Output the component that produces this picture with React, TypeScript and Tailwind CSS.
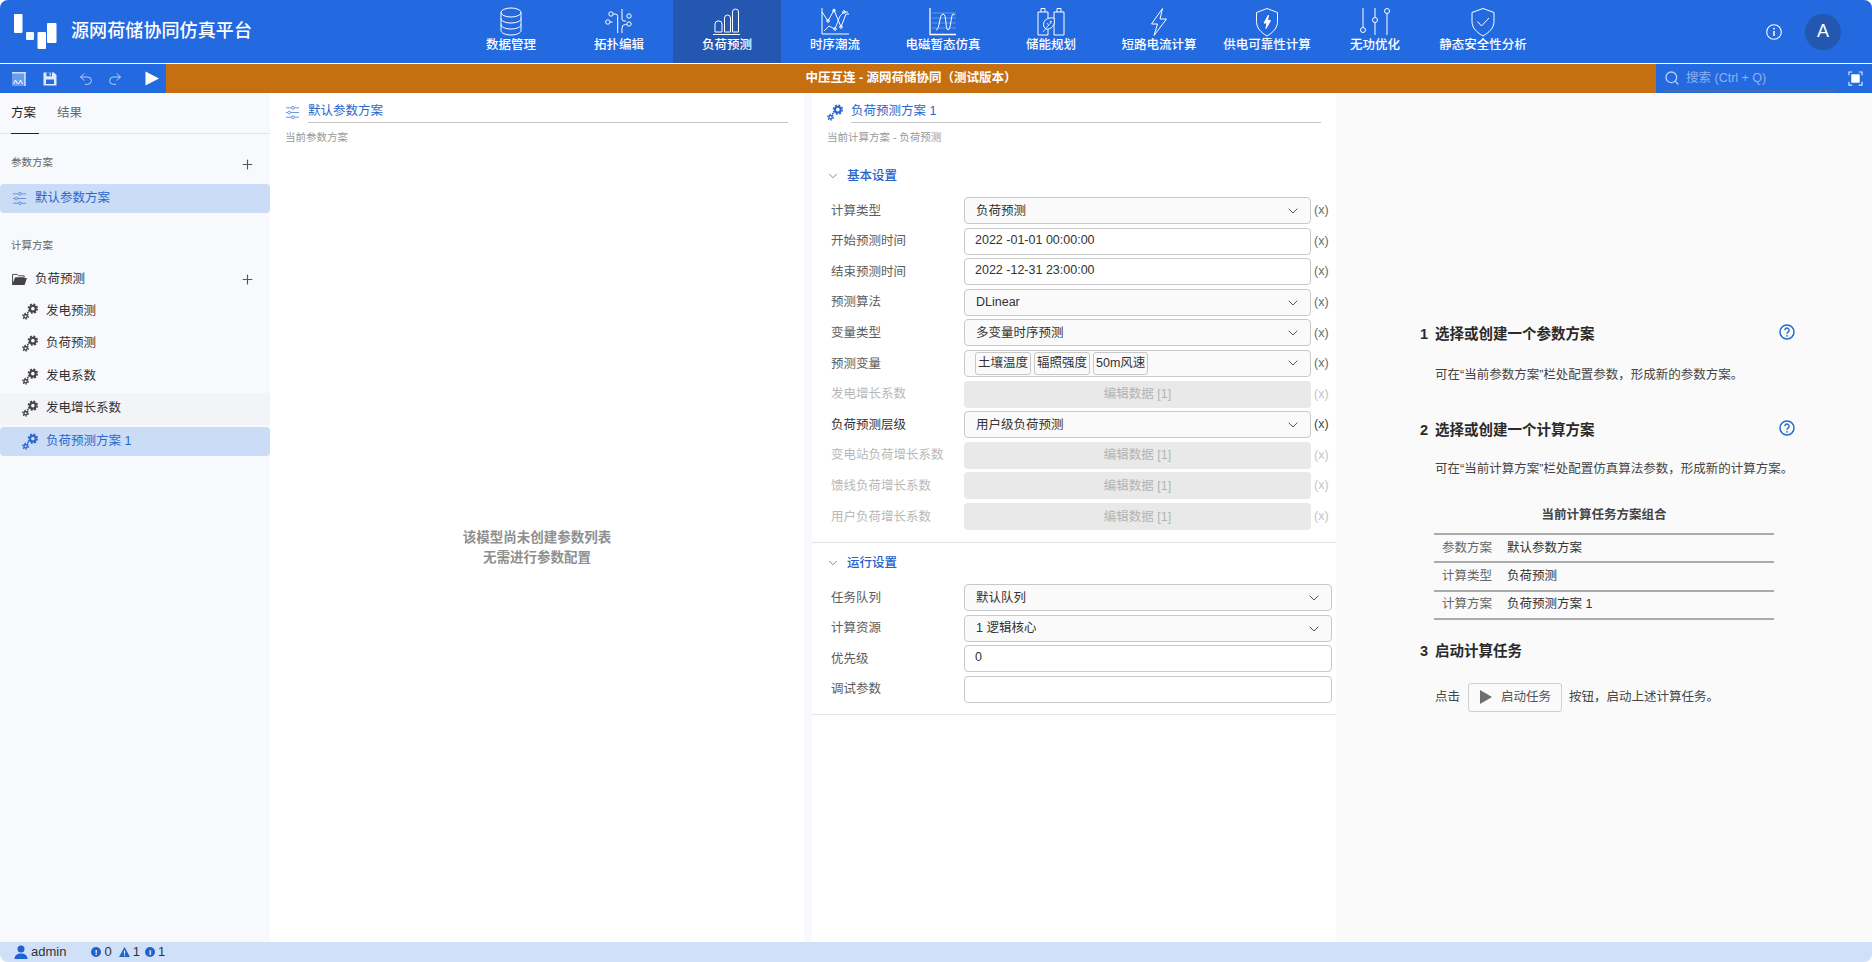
import { ReactNode } from "react";
import { ChevronDown, Plus, Redo2, Search, Undo2 } from "lucide-react";

const font = { fontFamily: '"Liberation Sans", "Noto Sans CJK SC", sans-serif' };

function Line(props: { children: ReactNode; className?: string }) {
    return (
        <svg viewBox="0 0 30 30" fill="none" stroke="currentColor" strokeWidth="1" className={props.className ?? "w-[30px] h-[30px]"}>
            {props.children}
        </svg>
    );
}

const navItems: { label: string; icon: ReactNode; active?: boolean }[] = [
    {
        label: "数据管理",
        icon: (
            <Line>
                <ellipse cx="15" cy="5.5" rx="10" ry="4.5" />
                <path d="M5 5.5v18c0 2.5 4.5 4.5 10 4.5s10-2 10-4.5v-18" />
                <path d="M5 11.5c0 2.5 4.5 4.5 10 4.5s10-2 10-4.5" />
                <path d="M5 17.5c0 2.5 4.5 4.5 10 4.5s10-2 10-4.5" />
            </Line>
        ),
    },
    {
        label: "拓扑编辑",
        icon: (
            <Line>
                <circle cx="7" cy="7" r="2.2" />
                <circle cx="3.8" cy="15" r="2.2" />
                <circle cx="25" cy="9" r="2.2" />
                <circle cx="25" cy="17" r="2.2" />
                <path d="M9.2 7h2a2.5 2.5 0 0 1 2.5 2.5V26" />
                <path d="M6 15h2.5" />
                <path d="M18 2v10a2 2 0 0 0 2 2h2" />
                <path d="M18 26v-5a3.500 3.500 0 0 1 3.500-3.500h1.300" />
            </Line>
        ),
    },
    {
        label: "负荷预测",
        active: true,
        icon: (
            <Line>
                <path d="M1 27.500h27" />
                <path d="M3 25v-8a3 3 0 0 1 3-3h1a3 3 0 0 1 3 3v8z" />
                <path d="M12.500 25V11a3 3 0 0 1 6 0v14z" />
                <path d="M20.500 25V5a3 3 0 0 1 6 0v20z" />
            </Line>
        ),
    },
    {
        label: "时序潮流",
        icon: (
            <Line>
                <path d="M2 1v26h27" />
                <path d="M2 5l6 9 6-11 7 17 5-13h3" />
                <path d="M4 24l5-5 6 3 5-13 4-4h4" strokeWidth="0.900" />
                <circle cx="8" cy="14" r="1.300" />
                <circle cx="14" cy="3.500" r="1.300" />
                <circle cx="15" cy="22" r="1.300" />
                <circle cx="21" cy="20" r="1.300" />
                <circle cx="24" cy="5" r="1.300" />
            </Line>
        ),
    },
    {
        label: "电磁暂态仿真",
        icon: (
            <Line>
                <path d="M2 1v26.500h26" strokeWidth="1.300" />
                <path d="M4 6h24M4 11h24M4 16h24M4 21h24" strokeWidth="0.500" opacity="0.600" />
                <path d="M8 23c4 0 3-16 7-16s2 16 5 16 3-16 5-16 1 1 2 1" />
            </Line>
        ),
    },
    {
        label: "储能规划",
        icon: (
            <Line>
                <path d="M2 5h10v23H2zM18 5h10v23H18zM5 5V1.500h4V5M21 5V1.500h4V5" />
                <path d="M8 20c-2-6 3-10 10-9 2 7-3 12-8 11z" fill="#236ae0" />
                <path d="M7 25l9-11M11 16l2 3M14 13.500l1 3" strokeWidth="0.700" />
            </Line>
        ),
    },
    {
        label: "短路电流计算",
        icon: (
            <Line>
                <path d="M18.500 1.500L7.500 17h6l-3.500 11.500L22.500 12h-6.500z" />
            </Line>
        ),
    },
    {
        label: "供电可靠性计算",
        icon: (
            <Line>
                <path d="M15 1.500l10.500 4v9c0 6.500-4.500 11-10.500 14.500C9 25.500 4.500 21 4.500 14.500v-9z" />
                <path d="M16.500 8l-4.500 8h3l-1 5.500 4.500-8h-3z" fill="currentColor" />
            </Line>
        ),
    },
    {
        label: "无功优化",
        icon: (
            <Line>
                <circle cx="3" cy="23" r="2.500" />
                <circle cx="15" cy="13" r="2.500" />
                <circle cx="27" cy="4" r="2.500" />
                <path d="M3 1v19.500M15 1v9.500M15 15.500V28M27 6.500V28" />
            </Line>
        ),
    },
    {
        label: "静态安全性分析",
        icon: (
            <Line>
                <path d="M15 1.500l11 4v9c0 6.500-5 11-11 14.500C9 25.500 4 21 4 14.500v-9z" />
                <path d="M9.500 14.500l4 4.500 7.500-8" />
            </Line>
        ),
    },
];

function SliderIcon() {
    return (
        <svg viewBox="0 0 16 16" fill="none" stroke="#5f8fe0" strokeWidth="1" className="w-[15px] h-[15px] shrink-0">
            <path d="M1 3h6M10 3h5M1 8h2M6 8h9M1 13h6M10 13h5" />
            <circle cx="8.500" cy="3" r="1.500" />
            <circle cx="4.500" cy="8" r="1.500" />
            <circle cx="8.500" cy="13" r="1.500" />
        </svg>
    );
}

function GearsIcon(props: { color: string }) {
    return (
        <svg viewBox="0 0 18 18" fill="none" stroke={props.color} className="w-[17px] h-[17px] shrink-0">
            <circle cx="11.500" cy="6" r="3" strokeWidth="2.200" />
            <circle cx="11.500" cy="6" r="4.600" strokeWidth="1.800" strokeDasharray="2 1.610" />
            <circle cx="3.800" cy="14" r="1.800" strokeWidth="1.500" />
            <circle cx="3.800" cy="14" r="3" strokeWidth="1.300" strokeDasharray="1.500 1.640" />
            <path d="M5.500 10.800l1.500-1.500" strokeWidth="1.400" />
        </svg>
    );
}

function FolderIcon() {
    return (
        <svg viewBox="0 0 16 14" className="w-[15px] h-[13px] shrink-0" fill="#444">
            <path d="M0.500 13V1.500h5l1.500 1.500h6v2H3.500L1.300 11" fill="none" stroke="#444" />
            <path d="M3.500 5.500H16L13.500 13H0.500z" />
        </svg>
    );
}

function TaskIcon() {
    return (
        <svg viewBox="0 0 16 16" className="w-[16px] h-[16px] shrink-0" fill="none">
            <rect x="1" y="1" width="14" height="14" fill="#6b9bee" />
            <path d="M1 1.800h14M13.800 1v14" stroke="#cfe0fb" strokeWidth="1.400" />
            <path d="M2.500 13l2-4 2 4M7.500 13l2-4 2 4" stroke="#ffffff" strokeWidth="1" />
        </svg>
    );
}

function SaveIcon() {
    return (
        <svg viewBox="0 0 14 14" className="w-[14px] h-[14px] shrink-0" fill="#e3ecfc">
            <path d="M0.500 0.500h10.500l2.500 2.500v10.500H0.500z" />
            <rect x="3.500" y="0.500" width="5.500" height="3.800" fill="#236ae0" />
            <rect x="3" y="7.500" width="8" height="4.500" fill="#236ae0" />
            <rect x="6.500" y="1.200" width="1.400" height="2.300" fill="#e3ecfc" />
        </svg>
    );
}

function CircleMark(props: { glyph: string }) {
    return (
        <svg viewBox="0 0 10 10" className="w-[10px] h-[10px]">
            <circle cx="5" cy="5" r="5" fill="#1f63cf" />
            <text x="5" y="8.300" textAnchor="middle" fontSize="8" fontWeight="700" fill="#ffffff" fontFamily="Liberation Sans">{props.glyph}</text>
        </svg>
    );
}

function HelpIcon() {
    return (
        <svg viewBox="0 0 16 16" className="w-[16px] h-[16px] shrink-0 -mt-[6px]" fill="none">
            <circle cx="8" cy="8" r="7" stroke="#1d6cc6" strokeWidth="1.500" />
            <path d="M5.900 6.200a2.100 2.100 0 1 1 3.300 1.700c-.8.5-1.200.9-1.200 1.800" stroke="#1d6cc6" strokeWidth="1.400" />
            <circle cx="8" cy="11.800" r="0.900" fill="#1d6cc6" />
        </svg>
    );
}

function TreeRow(props: { label: string; hover?: boolean }) {
    return (
        <div className={`h-[32.5px] pl-[22px] flex items-center gap-[7px] text-[12.5px] text-[#333] ${props.hover ? "bg-[#f3f4f7]" : ""}`}>
            <GearsIcon color="#444444" />
            {props.label}
        </div>
    );
}

function Chevron() {
    return <ChevronDown size={16} strokeWidth={1.500} className="text-[#555] shrink-0" />;
}

function SelectBox(props: { children: ReactNode; tags?: boolean }) {
    return (
        <div className={`flex-1 h-[27px] bg-[#fafafa] border border-[#c9c9c9] rounded-[4px] flex items-center pr-[9px] text-[12.5px] text-[#333] ${props.tags ? "pl-[10px]" : "pl-[11px] pt-[1px]"}`}>
            <div className="flex-1 flex items-center gap-[3px]">{props.children}</div>
            <Chevron />
        </div>
    );
}

function TextBox(props: { value?: string }) {
    return (
        <div className="flex-1 h-[27px] bg-white border border-[#c9c9c9] rounded-[4px] pl-[10px] pb-[2px] flex items-center text-[12.5px] text-[#333]">
            {props.value}
        </div>
    );
}

function Tag(props: { label: string }) {
    return (
        <span className="h-[23px] px-[2px] flex items-center bg-[#fafafa] border border-[#c9c9c9] rounded-[3px] whitespace-nowrap">
            {props.label}
        </span>
    );
}

function FormRow(props: { label: string; children: ReactNode; noVar?: boolean; off?: boolean; strong?: boolean }) {
    const labelColor = props.off ? "text-[#b8b8b8]" : props.strong ? "text-[#333]" : "text-[#5c5c5c]";
    const varColor = props.off ? "text-[#c4c4c4]" : props.strong ? "text-[#444]" : "text-[#6a6a6a]";
    return (
        <div className="flex items-center h-[27px]">
            <div className={`w-[133px] pt-[1px] text-[12.5px] shrink-0 ${labelColor}`}>{props.label}</div>
            {props.children}
            {!props.noVar && <div className={`w-[21px] pl-[3px] text-[12.5px] whitespace-nowrap ${varColor}`}>(x)</div>}
        </div>
    );
}

function EditData() {
    return (
        <div className="flex-1 h-[27px] bg-[#e9e9e9] rounded-[4px] pt-[1px] flex items-center justify-center text-[12.5px] text-[#b4b4b4]">
            编辑数据 [1]
        </div>
    );
}

function SectionHead(props: { label: string }) {
    return (
        <div className="h-[22px] pl-[14px] flex items-center gap-[7px] text-[12.5px] text-[#2663c9] font-medium">
            <ChevronDown size={14} strokeWidth={1.500} className="text-[#777]" />
            {props.label}
        </div>
    );
}

function StepHead(props: { num: string; label: string; help?: boolean }) {
    return (
        <div className="h-[24px] flex items-center text-[14.5px] font-bold text-[#2a2a2a]">
            <span className="w-[15px]">{props.num}</span>
            {props.label}
            {props.help && <span className="ml-auto mr-[0px]"><HelpIcon /></span>}
        </div>
    );
}

const combo = [
    ["参数方案", "默认参数方案"],
    ["计算类型", "负荷预测"],
    ["计算方案", "负荷预测方案 1"],
];

export default function App() {
    return (
        <div style={font} className="w-[1872px] h-[962px] flex flex-col overflow-hidden rounded-[8px] bg-white">

            {/* Top bar */}
            <div className="h-[64px] shrink-0 flex bg-[#236ae0] border-b border-white text-white">
                <div className="w-[457px] pl-[14px] flex items-center gap-[14px]">
                    <svg viewBox="0 0 43 36" className="w-[43px] h-[36px] mt-[0px]" fill="#ffffff">
                        <rect x="0" y="0" width="8.500" height="19" rx="1" />
                        <rect x="12" y="18" width="8" height="8" rx="1" opacity="0.950" />
                        <rect x="23.500" y="18" width="8.500" height="17" rx="1" />
                        <rect x="33" y="9" width="9.500" height="20" rx="1" />
                    </svg>
                    <span className="text-[18px] font-medium tracking-[0.1px] whitespace-nowrap">源网荷储协同仿真平台</span>
                </div>
                <div className="flex">
                    {navItems.map((item) => (
                        <div key={item.label} className={`w-[108px] h-[63px] pt-[7px] flex flex-col items-center ${item.active ? "bg-[#2458b0]" : ""}`}>
                            {item.icon}
                            <span className="text-[12.5px] leading-[16px] whitespace-nowrap font-medium">{item.label}</span>
                        </div>
                    ))}
                </div>
                <div className="flex-1 flex items-center pl-[229px] gap-[23px]">
                    <svg viewBox="0 0 16 16" className="w-[16px] h-[16px]" fill="none" stroke="#ffffff">
                        <circle cx="8" cy="8" r="7.300" strokeWidth="1.100" />
                        <path d="M8 7v5" strokeWidth="1.500" />
                        <circle cx="8" cy="4.700" r="0.900" fill="#ffffff" stroke="none" />
                    </svg>
                    <div className="w-[36px] h-[36px] rounded-full bg-[#2458b0] flex items-center justify-center text-[18px]">A</div>
                </div>
            </div>

            {/* Toolbar */}
            <div className="h-[29px] shrink-0 flex">
                <div className="w-[166px] bg-[#236ae0] flex items-center pl-[11px]">
                    <TaskIcon />
                    <span className="ml-[16px]"><SaveIcon /></span>
                    <Undo2 size={16} strokeWidth={1.500} className="ml-[21px] text-[#bcd0f5]" />
                    <Redo2 size={16} strokeWidth={1.500} className="ml-[13px] text-[#bcd0f5]" />
                    <svg viewBox="0 0 14 14" className="ml-[22px] w-[14px] h-[15px]" fill="#ffffff">
                        <path d="M0.500 0L14 7 0.500 14z" />
                    </svg>
                </div>
                <div className="flex-1 bg-[#c66f10] flex items-center justify-center text-white text-[12.5px] font-bold">
                    中压互连 - 源网荷储协同（测试版本）
                </div>
                <div className="w-[216px] bg-[#236ae0] flex items-center pl-[8px] pr-[8px]">
                    <div className="w-[172px] h-[24px] flex items-center gap-[6px] border-b border-[#4b6fb0] text-[12.5px] text-[#8fb1ee]">
                        <Search size={16} strokeWidth={2} className="text-[#b7cdf5]" />
                        搜索 (Ctrl + Q)
                    </div>
                    <svg viewBox="0 0 16 16" className="ml-[12px] w-[15px] h-[15px]" fill="none">
                        <path d="M1 4.500V1h3.500M11.500 1H15v3.500M15 11.500V15h-3.500M4.500 15H1v-3.500" stroke="#dce8fc" strokeWidth="1.200" />
                        <rect x="3.500" y="3.500" width="9" height="9" fill="#ffffff" />
                    </svg>
                </div>
            </div>

            {/* Main */}
            <div className="flex-1 flex min-h-0">

                {/* Sidebar */}
                <div className="w-[270px] shrink-0 bg-[#f8f9fd]">
                    <div className="h-[41px] border-b border-[#e6e6e8] pl-[11px] flex gap-[18px] text-[12.5px]">
                        <div className="h-[41px] w-[28px] border-b border-[#222] flex items-center text-[#222]">方案</div>
                        <div className="h-[41px] flex items-center text-[#666]">结果</div>
                    </div>
                    <div className="mt-[8px] h-[40px] pl-[11px] pr-[15px] pt-[2px] flex items-center justify-between text-[10.5px] text-[#666]">
                        参数方案
                        <Plus size={15} strokeWidth={1.800} className="text-[#555] mt-[2px]" />
                    </div>
                    <div className="mt-[2px] h-[29px] pl-[12px] flex items-center gap-[8px] bg-[#cbdcf6] rounded-[4px] text-[12.5px] text-[#2a66cc]">
                        <SliderIcon />
                        默认参数方案
                    </div>
                    <div className="mt-[16px] h-[34px] pl-[11px] flex items-center text-[10.5px] text-[#666]">计算方案</div>
                    <div className="h-[32px] pl-[12px] pr-[15px] flex items-center text-[12.5px] text-[#333]">
                        <FolderIcon />
                        <span className="ml-[8px]">负荷预测</span>
                        <Plus size={15} strokeWidth={1.800} className="text-[#555] ml-auto" />
                    </div>
                    <TreeRow label="发电预测" />
                    <TreeRow label="负荷预测" />
                    <TreeRow label="发电系数" />
                    <TreeRow label="发电增长系数" hover />
                    <div className="mt-[2px] h-[29px] pl-[22px] flex items-center gap-[7px] bg-[#cbdcf6] rounded-[4px] text-[12.5px] text-[#2a66cc]">
                        <GearsIcon color="#2a66cc" />
                        负荷预测方案 1
                    </div>
                </div>

                {/* Param panel */}
                <div className="w-[534px] shrink-0 bg-white pt-[8px] flex flex-col">
                    <div className="flex pl-[15px] pr-[16px] items-center gap-[8px]">
                        <SliderIcon />
                        <div className="flex-1 h-[22px] flex items-center border-b border-[#c4c4c4] text-[12.5px] text-[#2a66cc]">默认参数方案</div>
                    </div>
                    <div className="mt-[6px] pl-[15px] text-[10.5px] leading-[16px] text-[#9a9a9a]">当前参数方案</div>
                    <div className="flex-1 flex flex-col items-center justify-center pb-[48px] text-[13.5px] font-bold leading-[20px] text-[#8f8f8f]">
                        <div className="h-[20px] mt-[56px]">该模型尚未创建参数列表</div>
                        <div>无需进行参数配置</div>
                    </div>
                </div>

                <div className="w-[8px] shrink-0 bg-[#f8f9fd]" />

                {/* Calc panel */}
                <div className="w-[524px] shrink-0 bg-white pt-[8px]">
                    <div className="flex pl-[15px] pr-[15px] items-center gap-[7px]">
                        <GearsIcon color="#2a66cc" />
                        <div className="flex-1 h-[22px] flex items-center border-b border-[#c4c4c4] text-[12.5px] text-[#2a66cc]">负荷预测方案 1</div>
                    </div>
                    <div className="mt-[6px] pl-[15px] text-[10.5px] leading-[16px] text-[#9a9a9a]">当前计算方案 - 负荷预测</div>

                    <div className="mt-[20px] pb-[12px] border-b border-[#e4e4e4]">
                        <SectionHead label="基本设置" />
                        <div className="mt-[10px] pl-[19px] pr-[4px] flex flex-col gap-y-[3.6px]">
                            <FormRow label="计算类型"><SelectBox>负荷预测</SelectBox></FormRow>
                            <FormRow label="开始预测时间"><TextBox value="2022 -01-01 00:00:00" /></FormRow>
                            <FormRow label="结束预测时间"><TextBox value="2022 -12-31 23:00:00" /></FormRow>
                            <FormRow label="预测算法"><SelectBox>DLinear</SelectBox></FormRow>
                            <FormRow label="变量类型"><SelectBox>多变量时序预测</SelectBox></FormRow>
                            <FormRow label="预测变量">
                                <SelectBox tags>
                                    <Tag label="土壤温度" />
                                    <Tag label="辐照强度" />
                                    <Tag label="50m风速" />
                                </SelectBox>
                            </FormRow>
                            <FormRow label="发电增长系数" off><EditData /></FormRow>
                            <FormRow label="负荷预测层级" strong><SelectBox>用户级负荷预测</SelectBox></FormRow>
                            <FormRow label="变电站负荷增长系数" off><EditData /></FormRow>
                            <FormRow label="馈线负荷增长系数" off><EditData /></FormRow>
                            <FormRow label="用户负荷增长系数" off><EditData /></FormRow>
                        </div>
                    </div>

                    <div className="pt-[9px] pb-[11px] border-b border-[#e4e4e4]">
                        <SectionHead label="运行设置" />
                        <div className="mt-[10px] pl-[19px] pr-[4px] flex flex-col gap-y-[3.6px]">
                            <FormRow label="任务队列" noVar><SelectBox>默认队列</SelectBox></FormRow>
                            <FormRow label="计算资源" noVar><SelectBox>1 逻辑核心</SelectBox></FormRow>
                            <FormRow label="优先级" noVar><TextBox value="0" /></FormRow>
                            <FormRow label="调试参数" noVar><TextBox /></FormRow>
                        </div>
                    </div>
                </div>

                {/* Guide */}
                <div className="flex-1 bg-[#fafafa] pl-[84px] pt-[230px]">
                    <div className="w-[375px]">
                        <StepHead num="1" label="选择或创建一个参数方案" help />
                        <p className="mt-[18px] pl-[15px] h-[20px] leading-[20px] text-[12.5px] text-[#444]">可在“当前参数方案”栏处配置参数，形成新的参数方案。</p>
                        <div className="mt-[34px]"><StepHead num="2" label="选择或创建一个计算方案" help /></div>
                        <p className="mt-[16px] pl-[15px] h-[20px] leading-[20px] text-[12.5px] text-[#444] whitespace-nowrap">可在“当前计算方案”栏处配置仿真算法参数，形成新的计算方案。</p>

                        <div className="mt-[26px] ml-[14px] w-[340px]">
                            <div className="h-[20px] leading-[20px] text-center text-[12.5px] font-bold text-[#444]">当前计算任务方案组合</div>
                            <div className="mt-[8px] border-t-2 border-[#ababab]">
                                {combo.map(([name, value]) => (
                                    <div key={name} className="h-[28.3px] flex items-center border-b-2 border-[#ababab] text-[12.5px]">
                                        <span className="w-[73px] pl-[8px] text-[#666]">{name}</span>
                                        <span className="text-[#333]">{value}</span>
                                    </div>
                                ))}
                            </div>
                        </div>

                        <div className="mt-[20px]"><StepHead num="3" label="启动计算任务" /></div>
                        <div className="mt-[19px] pl-[15px] flex items-center text-[12.5px] text-[#444]">
                            点击
                            <div className="ml-[8px] w-[94px] h-[29px] border border-[#cfcfcf] rounded-[3px] flex items-center pl-[11px] gap-[9px] text-[#555]">
                                <svg viewBox="0 0 12 14" className="w-[12px] h-[14px]" fill="#6e6e6e">
                                    <path d="M0 0l12 7-12 7z" />
                                </svg>
                                启动任务
                            </div>
                            <span className="ml-[7px]">按钮，启动上述计算任务。</span>
                        </div>
                    </div>
                </div>
            </div>

            {/* Status bar */}
            <div className="h-[20px] shrink-0 bg-[#cfe0f8] flex items-center pl-[14px] text-[13px] text-[#333]">
                <svg viewBox="0 0 14 14" className="w-[14px] h-[14px]" fill="#1f63cf">
                    <circle cx="7" cy="4" r="3.500" />
                    <path d="M0.500 14c0-3.500 2.500-5.500 6.500-5.500s6.500 2 6.500 5.500z" />
                </svg>
                <span className="ml-[3px]">admin</span>
                <span className="ml-[25px]"><CircleMark glyph="!" /></span>
                <span className="ml-[3px]">0</span>
                <svg viewBox="0 0 11 10" className="ml-[7px] w-[11px] h-[10px]">
                    <path d="M5.500 0L11 10H0z" fill="#1f63cf" />
                    <path d="M5.500 3.500v3.200M5.500 7.500v1.200" stroke="#ffffff" strokeWidth="1.100" />
                </svg>
                <span className="ml-[3px]">1</span>
                <span className="ml-[5px]"><CircleMark glyph="i" /></span>
                <span className="ml-[3px]">1</span>
            </div>
        </div>
    );
}
